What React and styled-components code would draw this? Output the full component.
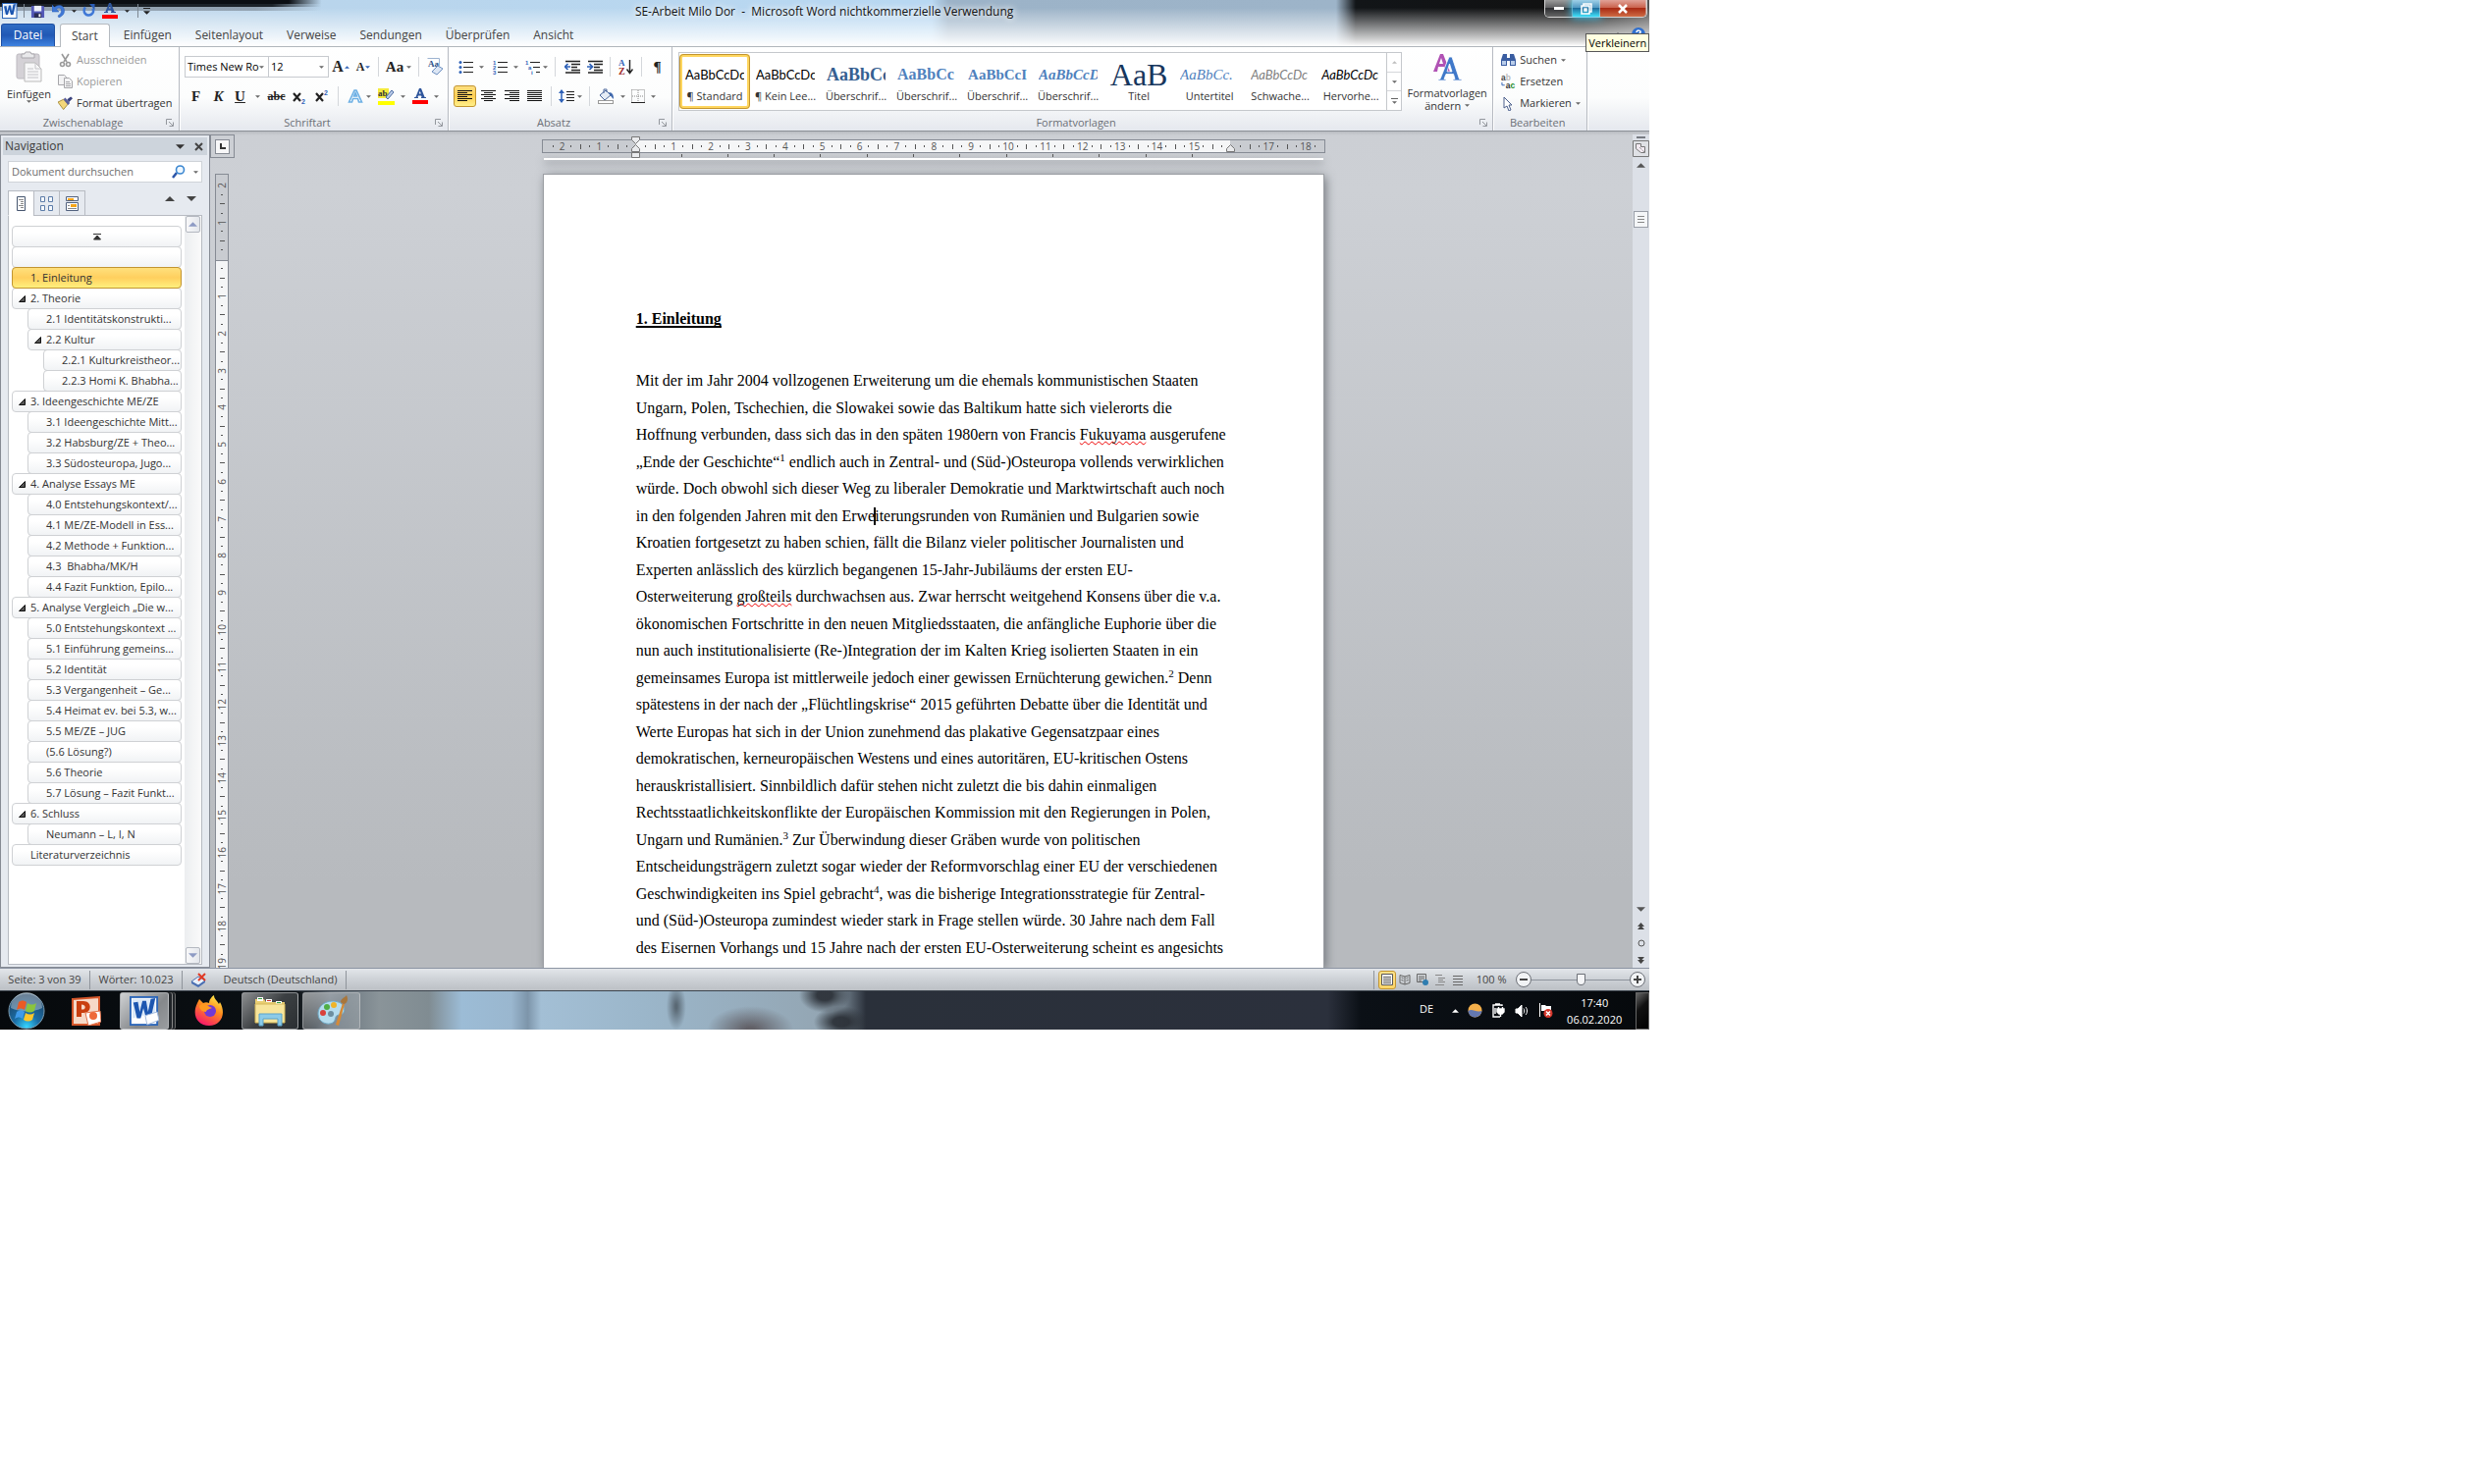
import React from "react";
import styled, { createGlobalStyle, css } from "styled-components";

const GlobalStyle = createGlobalStyle`
  * { box-sizing: border-box; }
  body { margin: 0; background: #fff; }
  button, input, select {
    font: inherit;
    color: inherit;
    margin: 0;
    padding: 0;
    border: none;
    background: none;
  }
  button { white-space: nowrap; }
  svg { display: block; flex: none; }
`;

// ---------- data ----------

const tabs = ["Start", "Einfügen", "Seitenlayout", "Verweise", "Sendungen", "Überprüfen", "Ansicht"];

const styleItems = [
  { name: "¶ Standard", sample: "AaBbCcDc", active: true },
  { name: "¶ Kein Lee...", sample: "AaBbCcDc" },
  { name: "Überschrif...", sample: "AaBbCc", kind: "h1" },
  { name: "Überschrif...", sample: "AaBbCc", kind: "h2" },
  { name: "Überschrif...", sample: "AaBbCcI", kind: "h3" },
  { name: "Überschrif...", sample: "AaBbCcD", kind: "h4" },
  { name: "Titel", sample: "AaB", kind: "title" },
  { name: "Untertitel", sample: "AaBbCc.", kind: "sub" },
  { name: "Schwache...", sample: "AaBbCcDc", kind: "weak" },
  { name: "Hervorhe...", sample: "AaBbCcDc", kind: "em" },
];

const headings = [
  { level: 1, text: "", top: true },
  { level: 1, text: "" },
  { level: 1, text: "1. Einleitung", active: true },
  { level: 1, text: "2. Theorie", open: true },
  { level: 2, text: "2.1 Identitätskonstrukti..." },
  { level: 2, text: "2.2 Kultur", open: true },
  { level: 3, text: "2.2.1 Kulturkreistheor..." },
  { level: 3, text: "2.2.3 Homi K. Bhabha..." },
  { level: 1, text: "3. Ideengeschichte ME/ZE", open: true },
  { level: 2, text: "3.1 Ideengeschichte Mitt..." },
  { level: 2, text: "3.2 Habsburg/ZE + Theo..." },
  { level: 2, text: "3.3 Südosteuropa, Jugo..." },
  { level: 1, text: "4. Analyse Essays ME", open: true },
  { level: 2, text: "4.0 Entstehungskontext/..." },
  { level: 2, text: "4.1 ME/ZE-Modell in Ess..." },
  { level: 2, text: "4.2 Methode + Funktion..." },
  { level: 2, text: "4.3  Bhabha/MK/H" },
  { level: 2, text: "4.4 Fazit Funktion, Epilo..." },
  { level: 1, text: "5. Analyse Vergleich „Die w...", open: true },
  { level: 2, text: "5.0 Entstehungskontext ..." },
  { level: 2, text: "5.1 Einführung gemeins..." },
  { level: 2, text: "5.2 Identität" },
  { level: 2, text: "5.3 Vergangenheit – Ge..." },
  { level: 2, text: "5.4 Heimat ev. bei 5.3, w..." },
  { level: 2, text: "5.5 ME/ZE – JUG" },
  { level: 2, text: "(5.6 Lösung?)" },
  { level: 2, text: "5.6 Theorie" },
  { level: 2, text: "5.7 Lösung – Fazit Funkt..." },
  { level: 1, text: "6. Schluss", open: true },
  { level: 2, text: "Neumann – L, I, N" },
  { level: 1, text: "Literaturverzeichnis" },
];

// ---------- window ----------

const Desktop = styled.div`
  width: 66.78%;
  font-family: "Open Sans", "Noto Sans", sans-serif;
  font-size: 11px;
  line-height: 16px;
  color: #3b3b3b;
  overflow: hidden;
`;

const Glass = styled.header`
  position: relative;
  height: 47px;
  background:
    linear-gradient(90deg, #0b0e12 17.5%, #0b0e1200 19.5%) 0 0 / 100% 4px no-repeat,
    linear-gradient(90deg, #1c2228 16.5%, #1c222800 19.5%) 0 4px / 100% 3px no-repeat,
    linear-gradient(90deg, #7c8894aa 15.5%, #7c889400 19.5%) 0 7px / 100% 4px no-repeat,
    linear-gradient(#ffffff00 8px, #ffffffcc 40px, #fff 47px),
    linear-gradient(90deg, #c9dcec 0, #b9d5ec 20%, #b8d8f2 56.5%, #9cb3c8 57.5%, #9db4c9 81%, #121518 82.2%, #111 96%, #555 100%);
`;

const TitleRow = styled.div`
  display: flex;
  height: 24px;
`;

const QuickAccess = styled.div`
  display: flex;
  align-items: center;
  width: 160px;
  height: 22px;
  padding-left: 2px;
  gap: 4px;
`;

const Title = styled.h1`
  flex: 1;
  margin: 0;
  padding-right: 54px;
  font-size: 12px;
  font-weight: 400;
  line-height: 24px;
  text-align: center;
  white-space: pre;
  color: #111;
  text-shadow: 0 0 6px #fff, 0 0 8px #fff;
`;

const WindowButtons = styled.div`
  display: flex;
  width: 105px;
  height: 18px;
  margin-right: 2px;
  border: 1px solid #d3d3d3;
  border-top: none;
  border-radius: 0 0 5px 5px;
`;

const looks = {
  min: css`width: 28px; background: linear-gradient(#9b9b9b, #5d5d5f 48%, #2f3033 50%, #666); border-radius: 0 0 0 4px;`,
  max: css`width: 28px; background: linear-gradient(#9fd0e8, #4e96c0 48%, #1f6e9e 50%, #40e0f8); box-shadow: 0 0 8px 1px #3ad0ff;`,
  close: css`flex: 1; background: linear-gradient(#e0a297, #c9604a 48%, #a92b14 50%, #cf6c45); border-radius: 0 0 4px 0;`,
};

const WindowButton = styled.button`
  display: flex;
  align-items: center;
  justify-content: center;
  border-right: 1px solid #d3d3d388;
  ${(p) => looks[p.$look]}
`;

const TabRow = styled.nav`
  display: flex;
  height: 23px;
  padding-left: 1px;
  font-size: 12px;
`;

const FileTab = styled.button`
  width: 55px;
  margin-right: 5px;
  color: #fff;
  border: 1px solid #1e4fa3;
  border-bottom: none;
  border-radius: 3px 3px 0 0;
  background: linear-gradient(#2f6dc4, #2058b5 50%, #3f83e0);
`;

const Tab = styled.button`
  padding: 0 12px;
  color: #444;
  border-radius: 3px 3px 0 0;
  ${(p) =>
    p.$active &&
    css`
      padding: 0 11px;
      margin-right: 2px;
      margin-bottom: -1px;
      border: 1px solid #b5bac0;
      border-bottom: none;
      background: #fff;
      z-index: 1;
    `}
`;

const HelpRow = styled.div`
  display: flex;
  flex: 1;
  justify-content: flex-end;
  align-items: center;
  gap: 10px;
  padding: 0 4px 2px 0;
`;

const Tooltip = styled.div`
  position: absolute;
  right: 0;
  top: 34px;
  z-index: 5;
  padding: 0 2px;
  line-height: 17px;
  border: 1px solid #575757;
  background: #ffffe1;
  color: #000;
`;

// ---------- ribbon ----------

const Ribbon = styled.div`
  display: flex;
  height: 87px;
  padding-right: 63px;
  border-top: 1px solid #b0b6bc;
  border-bottom: 1px solid #8b9097;
  background: linear-gradient(#fff, #fcfdfd 60%, #e5e8ee);
`;

const Group = styled.section`
  display: flex;
  flex-direction: column;
  width: ${(p) => p.$w}px;
  flex: ${(p) => (p.$grow ? "1 1 0" : "none")};
  border-right: 1px solid #b6bac1;
  box-shadow: 1px 0 0 #fff;
`;

const GroupBody = styled.div`
  display: flex;
  height: 69px;
  padding: ${(p) => p.$pad || "0"};
`;

const GroupFoot = styled.div`
  display: flex;
  align-items: center;
  height: 16px;
  padding-right: 5px;
  color: #6b6f76;

  span {
    flex: 1;
    text-align: center;
  }
`;

const Rows = styled.div`
  display: flex;
  flex-direction: column;
  flex: 1;
  gap: 8px;
`;

const ToolRow = styled.div`
  display: flex;
  align-items: center;
  height: 22px;
`;

const Tool = styled.button`
  display: flex;
  align-items: center;
  justify-content: center;
  gap: ${(p) => p.$gap || 3}px;
  flex: none;
  width: ${(p) => p.$w || 23}px;
  height: 22px;
  color: #222;
  ${(p) =>
    p.$active &&
    css`
      border: 1px solid #c29530;
      border-radius: 3px;
      background: linear-gradient(#ffdf80, #ffcf55 50%, #fff08a);
    `}
`;

const Glyph = styled.span`
  font-family: "Liberation Serif", serif;
  font-size: ${(p) => p.$size || 15}px;
  font-weight: bold;
  font-style: ${(p) => (p.$italic ? "italic" : "normal")};
  text-decoration: ${(p) => p.$line || "none"};
  color: #222;
`;

const Sep = styled.span`
  flex: none;
  width: 1px;
  height: ${(p) => p.$h || 20}px;
  margin: 0 ${(p) => p.$m || 5}px;
  background: ${(p) => p.$c || "#d4d7db"};
`;

const Combo = styled.label`
  display: flex;
  align-items: center;
  width: ${(p) => p.$w}px;
  height: 22px;
  margin-right: -1px;
  padding: 0 4px 0 2px;
  border: 1px solid #c7cacf;
  background: #fff;
  color: #000;

  select {
    flex: 1;
    min-width: 0;
    appearance: none;
    outline: none;
  }
`;

const Stack = styled.div`
  display: flex;
  flex-direction: column;
`;

const TextTool = styled.button`
  display: flex;
  align-items: center;
  gap: 4px;
  height: 22px;
  color: ${(p) => (p.disabled ? "#9a9a9a" : "#333")};
`;

const BigTool = styled.button`
  display: flex;
  flex-direction: column;
  align-items: center;
  flex: none;
  width: ${(p) => p.$w}px;
  padding-top: 2px;
  line-height: 13px;
  color: #333;

  > svg:first-child {
    margin-bottom: 5px;
  }
  > span {
    display: flex;
    align-items: center;
    gap: 4px;
  }
`;

const Gallery = styled.div`
  display: flex;
  flex: 1;
  height: 60px;
  border: 1px solid #c5c8cc;
  background: #fff;
`;

const StyleItem = styled.button`
  display: flex;
  flex-direction: column;
  align-items: center;
  flex: 1 1 0;
  min-width: 0;
  height: 56px;
  margin-top: 1px;
  color: #333;
  border: 3px solid transparent;
  ${(p) =>
    p.$active &&
    css`
      border-color: #ffd65e;
      border-radius: 4px;
      outline: 1px solid #c29530;
      outline-offset: -1px;
    `}
`;

const sampleLooks = {
  h1: css`font: bold 18px "Liberation Serif", serif; color: #365f91;`,
  h2: css`font: bold 16px "Liberation Serif", serif; color: #4f81bd;`,
  h3: css`font: bold 15px "Liberation Serif", serif; color: #4f81bd;`,
  h4: css`font: italic bold 15px "Liberation Serif", serif; color: #4f81bd;`,
  title: css`font: 32px "Liberation Serif", serif; color: #17365d;`,
  sub: css`font: italic 15px "Liberation Serif", serif; color: #4f81bd;`,
  weak: css`font-style: italic; color: #808080;`,
  em: css`font-style: italic;`,
};

const Sample = styled.span`
  display: flex;
  align-items: flex-end;
  justify-content: ${(p) => (p.$kind === "title" ? "center" : "flex-start")};
  width: 60px;
  height: 31px;
  overflow: hidden;
  font-family: Lato, sans-serif;
  font-size: 13px;
  color: #000;
  ${(p) => sampleLooks[p.$kind]}
  line-height: 26px;
`;

const StyleName = styled.span`
  line-height: 18px;
`;

const GalleryNav = styled.div`
  display: flex;
  flex-direction: column;
  width: 15px;
  border-left: 1px solid #c5c8cc;

  button {
    display: flex;
    flex: 1;
    flex-direction: column;
    align-items: center;
    justify-content: center;
    gap: 2px;
    border-bottom: 1px solid #d5d7da;
  }
  button:last-child {
    border-bottom: none;
  }
`;

// small dash above a caret, marks "more"
const Dash = styled.span`
  width: 7px;
  height: 1px;
  background: ${(p) => p.$c || "#666"};
`;

const MoreStack = styled.span`
  display: flex;
  flex-direction: column;
  align-items: center;
  gap: 2px;
`;

// ---------- workspace ----------

const Workspace = styled.main`
  display: flex;
  padding-top: 3px;
  background: linear-gradient(#b9bcc1 0, #cccfd4 4px, #cdd0d5 60px, #b7babe 90%);
`;

const NavPane = styled.aside`
  display: flex;
  flex-direction: column;
  width: 214px;
  padding: 2px;
  border: 1px solid #868b94;
  background: #e6eaf0;
`;

const NavHead = styled.div`
  display: flex;
  align-items: center;
  gap: 10px;
  height: 18px;
  padding: 0 4px 0 2px;
  background: #cdd4dc;

  h2 {
    flex: 1;
    margin: 0;
    font-size: 12px;
    font-weight: 400;
  }
`;

const SearchBox = styled.label`
  display: flex;
  align-items: center;
  gap: 8px;
  height: 22px;
  margin: 6px 5px 0;
  padding: 0 3px;
  border: 1px solid #cfd3d8;
  background: #fff;

  input {
    flex: 1;
    min-width: 0;
    outline: none;
  }
  input::placeholder {
    color: #6d6d6d;
  }
`;

const ViewTabs = styled.div`
  display: flex;
  align-items: flex-end;
  height: 34px;
  margin: 0 5px -1px;
`;

const ViewTab = styled.button`
  display: flex;
  align-items: center;
  justify-content: center;
  width: 27px;
  height: 26px;
  margin-right: -1px;
  border: 1px solid #b7bbc2;
  background: ${(p) => (p.$active ? "#fff" : "#e6eaf0")};
  border-bottom-color: ${(p) => (p.$active ? "#fff" : "#b7bbc2")};
  z-index: 1;
`;

const Arrows = styled.div`
  display: flex;
  flex: 1;
  justify-content: flex-end;
  gap: 12px;
  height: 20px;
  padding-right: 6px;
`;

const Outline = styled.div`
  display: flex;
  flex: 1;
  margin: 0 5px;
  border: 1px solid #b7bbc2;
  background: #fff;
`;

const HeadingList = styled.ul`
  flex: 1;
  min-width: 0;
  margin: 0;
  padding: 10px 3px 0;
  list-style: none;
`;

const HeadingRow = styled.button`
  display: flex;
  align-items: center;
  width: calc(100% - ${(p) => (p.$level - 1) * 16}px);
  height: 22px;
  margin: 0 0 -1px ${(p) => (p.$level - 1) * 16}px;
  padding-left: ${(p) => (p.$center ? 0 : 6)}px;
  white-space: pre;
  border: 1px solid #cfd1d4;
  border-radius: 4px;
  background: linear-gradient(#fff 30%, #f1f3f5);
  color: #333;
  justify-content: ${(p) => (p.$center ? "center" : "flex-start")};
  ${(p) =>
    p.$active &&
    css`
      position: relative;
      border-color: #c29530;
      background: linear-gradient(#ffe07c, #ffcf5e 50%, #fff07e);
    `}

  svg, i {
    width: 12px;
    flex: none;
  }
`;

const ListScroll = styled.div`
  display: flex;
  flex-direction: column;
  justify-content: space-between;
  width: 17px;
  padding: 0 1px;
  background: linear-gradient(90deg, #eceef0, #fafafa);

  button {
    display: flex;
    align-items: center;
    justify-content: center;
    height: 17px;
    border: 1px solid #b4b8c0;
    border-radius: 2px;
    background: linear-gradient(90deg, #f8f8f9, #e4e7ec);
  }
`;

const RulerColumn = styled.div`
  display: flex;
  flex-direction: column;
  width: 25px;
`;

const TabStop = styled.button`
  display: flex;
  align-items: center;
  justify-content: center;
  width: 25px;
  height: 24px;
  border: 1px solid #868b94;

  span {
    display: flex;
    align-items: center;
    justify-content: center;
    width: 15px;
    height: 15px;
    border: 1px solid #868b94;
    background: #f7f7f8;
  }
`;

const VRuler = styled.div`
  display: flex;
  flex-direction: column;
  flex: 1;
  width: 14px;
  margin: 16px 0 0 5px;
  padding-top: 6px;
  border: 1px solid #868b94;
  border-bottom: none;
  background: linear-gradient(#c9ccd1 87px, #868b94 87px, #868b94 88px, #f5f6f7 88px);
`;

const Mark = styled.span`
  display: flex;
  align-items: center;
  justify-content: center;
  flex: 1 1 0;
  min-width: 0;
  min-height: 0;
  font-size: 10px;
  line-height: 10px;
  color: #555;
  white-space: nowrap;

  b {
    font-weight: 400;
    ${(p) => p.$vertical && "writing-mode: vertical-rl; transform: rotate(180deg);"}
  }
  i {
    flex: none;
    width: ${(p) => (p.$vertical ? (p.$long ? 5 : 2) : 1)}px;
    height: ${(p) => (p.$vertical ? 1 : p.$long ? 5 : 2)}px;
    background: #555;
  }
`;

const DocColumn = styled.div`
  flex: 1;
  display: flex;
  flex-direction: column;
  align-items: center;
  min-width: 0;
`;

const HRulerWrap = styled.div`
  width: 56%;
  height: 24px;
  padding-top: 5px;
`;

const HRuler = styled.div`
  display: flex;
  position: relative;
  height: 14px;
  padding: 0 5px;
  border: 1px solid #868b94;
  background: linear-gradient(90deg, #c9ccd1 11.8%, #f5f6f7 11.8%, #f5f6f7 87.9%, #c9ccd1 87.9%);
`;

const Indent = styled.span`
  position: absolute;
  left: ${(p) => p.$at}%;
  top: ${(p) => p.$top}px;
  margin-left: -4px;
`;

const DefaultTabs = styled.div`
  display: flex;
  width: 71.2%;
  height: 3px;
  margin: 1px 0 0 11.9%;

  span {
    flex: 1;
    border-right: 1px solid #555;
  }
`;

const PreviousPage = styled.div`
  width: 55.8%;
  height: 2px;
  background: #fff;
  box-shadow: 0 3px 8px #6b6f75;
`;

const Page = styled.article`
  width: 55.8%;
  margin-top: 15px;
  padding: 133px 0 7px 94px;
  font-family: "Liberation Serif", serif;
  font-size: 16px;
  color: #000;
  background: #fff;
  box-shadow: 0 0 0 1px #9b9ea3, 2px 2px 10px #6b6f75;
  clip-path: inset(-14px -14px 0 -14px);

  h3 {
    margin: 0 0 35px;
    font-size: 16px;
    line-height: 28px;
    text-decoration: underline;
    text-decoration-thickness: 2px;
    text-decoration-skip-ink: none;
    text-underline-offset: 2px;
  }
  sup {
    font-size: 11px;
    line-height: 0;
  }
`;

const Line = styled.div`
  line-height: 28px;
  white-space: pre;

  &:nth-of-type(even) {
    line-height: 27px;
  }
`;

const Misspelled = styled.span`
  text-decoration: underline wavy #e00 1px;
  text-decoration-skip-ink: none;
  text-underline-offset: 1px;
`;

const TextCursor = styled.span`
  position: relative;

  &::after {
    content: "";
    position: absolute;
    left: -1px;
    top: 0;
    width: 2px;
    height: 18px;
    background: #000;
  }
`;

const DocScroll = styled.div`
  display: flex;
  flex-direction: column;
  align-items: center;
  width: 17px;
  background: #dce0e7;

  button {
    display: flex;
    align-items: center;
    justify-content: center;
    width: 17px;
    height: 17px;
  }
`;

const SplitBar = styled.span`
  width: 9px;
  height: 2px;
  margin: 2px 0;
  background: #777b82;
`;

const ScrollThumb = styled.span`
  display: flex;
  align-items: center;
  justify-content: center;
  width: 15px;
  height: 17px;
  margin-top: 38px;
  border: 1px solid #9a9fa8;
  background: #f4f6f8;
`;

const ScrollEnd = styled.div`
  margin-top: auto;
`;

// ---------- status bar / taskbar ----------

const StatusBar = styled.footer`
  display: flex;
  align-items: center;
  height: 23px;
  border-top: 1px solid #8c94a3;
  background: linear-gradient(#e3e6ea, #cdd1d6 50%, #bcc0c5);
`;

const StatusCell = styled.button`
  display: flex;
  align-items: center;
  justify-content: center;
  width: ${(p) => p.$w}px;
  height: 19px;
  color: #444;
  border-right: ${(p) => (p.$plain ? "none" : "1px solid #8f949b")};
`;

const ViewButtons = styled.div`
  display: flex;
  align-items: center;
  margin-left: auto;
  padding: 0 4px;
  border-left: 1px solid #8f949b;
`;

const ViewButton = styled.button`
  display: flex;
  align-items: center;
  justify-content: center;
  width: 18px;
  height: 19px;
  border: 1px solid ${(p) => (p.$active ? "#c29530" : "transparent")};
  border-radius: 3px;
  background: ${(p) => (p.$active ? "linear-gradient(#ffe28a, #ffd567)" : "none")};
`;

const Round = styled.button`
  display: flex;
  align-items: center;
  justify-content: center;
  width: 16px;
  height: 16px;
  border: 1px solid #6c7077;
  border-radius: 50%;
  background: #f1f3f5;
`;

const Zoom = styled.input`
  appearance: none;
  width: 100px;
  height: 16px;
  background: linear-gradient(#8d939c, #8d939c) center / 100% 1px no-repeat;

  &::-webkit-slider-thumb {
    appearance: none;
    width: 9px;
    height: 12px;
    border: 1px solid #6c7077;
    border-radius: 1px 1px 5px 5px;
    background: #f4f5f7;
  }
`;

const Taskbar = styled.div`
  display: flex;
  align-items: center;
  height: 40px;
  border-top: 1px solid #3b434c;
  color: #fff;
  background:
    radial-gradient(ellipse 10px 24px at 41% 40%, #4a5660cc 10%, #4a566000),
    radial-gradient(ellipse 26px 18px at 50% 10%, #2b3037ee 30%, #2b303700),
    radial-gradient(ellipse 44px 24px at 45.5% 100%, #5a555add 10%, #5a555a00),
    radial-gradient(ellipse 28px 16px at 51% 80%, #2b3037ee 30%, #2b303700),
    linear-gradient(90deg, #06090c 0, #0b1014 18%, #64707a 20%, #8a9499 23%, #808c92 26%, #9cbcd6 28%, #9ab7cf 31%, #7d95aa 32%, #a3bfd5 32.8%, #9bb6ca 39%, #93a5b2 50.5%, #2a303a 52.5%, #2b303c 80.5%, #0b1016 82.5%, #06090c 100%);
`;

const StartButton = styled.button`
  display: flex;
  justify-content: center;
  width: 54px;
`;

const TaskButton = styled.button`
  display: flex;
  align-items: center;
  justify-content: center;
  width: ${(p) => p.$w}px;
  height: 38px;
  margin-left: ${(p) => p.$ml || 0}px;
  ${(p) =>
    p.$running &&
    css`
      border: 1px solid #b9bcbfaa;
      border-radius: 3px;
      background: linear-gradient(135deg, #ffffff88, #ffffff33 50%, #ffffff22);
    `}
  ${(p) =>
    p.$stacked &&
    css`
      background: linear-gradient(135deg, #d0d2d4, #85888b 60%, #9a9da0);
      box-shadow: 3px 0 0 #202428, 4px 0 0 #888, 6px 0 0 #202428, 7px 0 0 #666;
    `}
`;

const Tray = styled.div`
  display: flex;
  align-items: center;
  margin-left: auto;
  gap: 9px;
`;

const Language = styled.button`
  margin-right: 10px;
  padding-bottom: 4px;
  color: #fff;
`;

const Clock = styled.time`
  width: 66px;
  text-align: center;
  line-height: 17px;
`;

const ShowDesktop = styled.button`
  width: 14px;
  height: 38px;
  border: 1px solid #666;
  background: linear-gradient(135deg, #666, #111 40%, #000);
`;

// ---------- icons ----------

const Caret = ({ up, s = 5, c = "#666" }) => (
  <svg width={s} height={Math.ceil(s / 2)} viewBox="0 0 10 5">
    <path d={up ? "M0 5L5 0L10 5z" : "M0 0h10L5 5z"} fill={c} />
  </svg>
);

const WordLogo = ({ s = 16 }) => (
  <svg width={s} height={s} viewBox="0 0 32 32">
    <rect x="1" y="1" width="29" height="30" fill="#fff" stroke="#2c66b8" strokeWidth="2" />
    <path d="M3 3h25v15L3 24z" fill="#dce9f8" />
    <path d="M4 7l5-1 2 11 3-12h4l2 12 3-14 5-1-5 22h-5l-3-11-3 11H8z" fill="#1c56b0" />
    {s > 20 && <path d="M17 21l13-4 2 9-13 5z" fill="#fff" stroke="#9fb8dc" />}
  </svg>
);

const SaveIcon = () => (
  <svg width="15" height="15" viewBox="0 0 16 16">
    <path d="M1 2h13l1 1v12H1z" fill="#5359b8" />
    <path d="M4 2h8v6H4z" fill="#eef2fa" />
    <path d="M4 10h8v5H4z" fill="#2a2d55" />
    <path d="M9 11h2v3H9z" fill="#fff" />
  </svg>
);

const UndoIcon = () => (
  <svg width="13" height="14" viewBox="0 0 13 14">
    <path d="M0 1v7h7L4.500 5.500C7 3 9.500 4 9.500 7c0 2-1.500 4-3.500 5l1 2c4-2 5.500-4 5.500-7C12.500 1 6 0 2.500 3.500z" fill="#3f78d6" stroke="#2a5cb4" strokeWidth=".5" />
  </svg>
);

const RedoIcon = () => (
  <svg width="13" height="14" viewBox="0 0 13 14">
    <path d="M3 3.500a4.700 4.700 0 1 0 7.500 1" fill="none" stroke="#3f78d6" strokeWidth="2.600" />
    <path d="M7 0h5.500v6z" fill="#2a5cb4" />
  </svg>
);

const ColorA = ({ bar = "#f00", s = 16 }) => (
  <svg width={s} height={s} viewBox="0 0 16 16">
    <path d="M3 10L7 0h2l4 10h-3l-1-2.500H6L5 10zM6.800 5.500h2L7.800 2.800z" fill="#2f569c" fillRule="evenodd" />
    <path d="M2 9.500h4M9 9.500h5" stroke="#2f569c" />
    <rect y="12" width="16" height="4" fill={bar} />
  </svg>
);

const PasteIcon = () => (
  <svg width="28" height="32" viewBox="0 0 28 32">
    <rect x="1" y="3" width="23" height="25" rx="2" fill="#d4d1d6" stroke="#bdbac0" />
    <path d="M6 7V3h3l1-2h5l1 2h3v4z" fill="#e9e9eb" stroke="#a9a7ac" />
    <path d="M9 12h11l6 6v13H9z" fill="#f7f7f8" stroke="#bbb" />
    <path d="M20 12v6h6M12 18h6M12 21h11M12 24h11M12 27h11" fill="none" stroke="#c4c4c8" />
  </svg>
);

const CutIcon = () => (
  <svg width="15" height="15" viewBox="0 0 15 15" fill="none" stroke="#999" strokeWidth="1.600">
    <path d="M4 1l5 8M11 1L6 9" />
    <circle cx="4.500" cy="11.500" r="2" />
    <circle cx="10.500" cy="11.500" r="2" />
  </svg>
);

const CopyIcon = () => (
  <svg width="15" height="14" viewBox="0 0 15 14" fill="#f3f3f4" stroke="#a6a6aa">
    <path d="M.5.5h6l2 2v8h-8z" />
    <path d="M6.500 3.500h5l3 3v7h-8zM8 7.500h4M8 9.500h5M8 11.500h5" />
  </svg>
);

const BrushIcon = () => (
  <svg width="15" height="14" viewBox="0 0 16 14">
    <path d="M0 6l6-3 5 5-5 6z" fill="#f4d77a" stroke="#a48a3c" />
    <path d="M6 3l2-2 5 6-2 2z" fill="#5b5f9b" />
    <path d="M10 3l4-3 2 2-4 4z" fill="#39427d" />
  </svg>
);

const EraserIcon = () => (
  <svg width="18" height="18" viewBox="0 0 18 18">
    <text x="1" y="9" fontSize="9" fontWeight="bold" fontFamily="Liberation Serif" fill="#2b4f87">Aa</text>
    <path d="M5 14l6-6 5 3-6 6z" fill="#dce6f4" stroke="#6d8fc0" />
    <path d="M0.500 0.500h12v9" fill="none" stroke="#9db3d0" />
  </svg>
);

const ScriptX = ({ up }) => (
  <svg width="14" height="15" viewBox="0 0 14 15">
    <path d="M1 4l7 8M8 4l-7 8" stroke="#222" strokeWidth="2.200" />
    <text x="9" y={up ? 6 : 15} fontSize="7" fontWeight="bold" fontFamily="Liberation Sans" fill="#2f62b8">2</text>
  </svg>
);

const OutlineA = () => (
  <svg width="16" height="16" viewBox="0 0 16 16">
    <path d="M1.500 14L7 2h2l5.500 12h-3l-1-3.500h-5l-1 3.500zM6.500 8h3L8 4.500z" fill="#fff" stroke="#6db0e4" strokeWidth="1.600" fillRule="evenodd" />
  </svg>
);

const MarkerIcon = () => (
  <svg width="17" height="17" viewBox="0 0 17 17">
    <rect width="11" height="10" fill="#f4ea3c" />
    <text x="0" y="8" fontSize="9" fontWeight="bold" fontFamily="Liberation Serif" fill="#333">ab</text>
    <path d="M8 9l6-7 2 2-6 7z" fill="#b9cbe8" stroke="#4c6ca3" />
    <rect y="13" width="17" height="4" fill="#ff0" />
  </svg>
);

const lineShapes = {
  left: [[0, 15], [0, 10], [0, 15], [0, 10], [0, 15], [0, 10]],
  center: [[0, 15], [3, 9], [0, 15], [3, 9], [0, 15], [3, 9]],
  right: [[0, 15], [5, 10], [0, 15], [5, 10], [0, 15], [5, 10]],
  full: [[0, 15], [0, 15], [0, 15], [0, 15], [0, 15], [0, 15]],
};

const AlignIcon = ({ kind, c = "#111" }) => (
  <svg width="15" height="12" viewBox="0 0 15 12">
    {lineShapes[kind].map(([x, w], i) => (
      <rect key={i} x={x} y={i * 2} width={w} height="1" fill={c} />
    ))}
  </svg>
);

const ListIcon = ({ kind }) => (
  <svg width="15" height="15" viewBox="0 0 15 15">
    {[2, 7, 12].map((y, i) => (
      <g key={y}>
        {kind === "dots" ? (
          <circle cx="2" cy={y + 0.5} r="1.500" fill="#2f62b8" />
        ) : (
          <text x={kind === "multi" ? i * 3 : 0} y={y + 3} fontSize="6" fontWeight="bold" fontFamily="Liberation Sans" fill="#2f62b8">
            {kind === "multi" ? "1ai"[i] : i + 1}
          </text>
        )}
        <rect x={kind === "multi" ? 5 + i * 3 : 5} y={y} width={kind === "multi" ? 10 - i * 3 : 10} height="1" fill="#222" />
      </g>
    ))}
  </svg>
);

const IndentIcon = ({ out }) => (
  <svg width="16" height="14" viewBox="0 0 16 14">
    <path d="M1 1.500h15M7 4.500h9M7 7.500h6M7 10.500h9M1 13h15" stroke="#222" strokeWidth="1.400" />
    <path d={out ? "M6 7H1M3.500 4L.5 7l3 3" : "M0 7h5M2.500 4l3 3-3 3"} stroke="#2f62b8" strokeWidth="1.700" fill="none" />
  </svg>
);

const SortIcon = () => (
  <svg width="15" height="16" viewBox="0 0 15 16">
    <text x="0" y="7" fontSize="9" fontWeight="bold" fontFamily="Liberation Serif" fill="#2f62b8">A</text>
    <text x="0" y="16" fontSize="10" fontWeight="bold" fontFamily="Liberation Serif" fill="#a02c2c">Z</text>
    <path d="M11.500 1v13M8.500 10.500l3 4 3-4" stroke="#222" strokeWidth="1.400" fill="none" />
  </svg>
);

const SpacingIcon = () => (
  <svg width="16" height="16" viewBox="0 0 16 16">
    <path d="M3 2v12" stroke="#2f62b8" strokeWidth="1.500" />
    <path d="M0 5l3-4 3 4zM0 11l3 4 3-4z" fill="#2f62b8" />
    <path d="M8 3.500h8M8 6.500h8M8 9.500h8M8 12.500h8" stroke="#222" />
  </svg>
);

const FillIcon = () => (
  <svg width="17" height="16" viewBox="0 0 17 16">
    <path d="M2 7l6-5 5 5-6 5z" fill="#e5ecf6" stroke="#4a679c" />
    <path d="M6 5V1h3v3" fill="none" stroke="#4a679c" />
    <path d="M11 4c4 0 5 3 5 7l-2-2-2-3z" fill="#3e68ad" />
    <rect x="0.500" y="12.500" width="15" height="3" fill="#fff" stroke="#999" />
  </svg>
);

const BorderIcon = () => (
  <svg width="14" height="14" viewBox="0 0 14 14">
    <path d="M.5.5h13v13M.5.500v13M7 1v12M1 7h12" fill="none" stroke="#888" strokeDasharray="1 1" />
    <path d="M0 13.500h14" stroke="#222" />
  </svg>
);

const LauncherIcon = () => (
  <svg width="8" height="8" viewBox="0 0 8 8" fill="none" stroke="#93979d">
    <path d="M.5 6V.5H6M3 3l4 4M7.500 3.500v4h-4" />
  </svg>
);

const ChangeStyles = () => (
  <svg width="30" height="28" viewBox="0 0 30 28">
    <path d="M1 18L8 0h3l7 18h-5l-1-5H6l-1 5zM7 10h4L9 4z" fill="#b052b4" fillRule="evenodd" />
    <path d="M6 27v-1.500h2L17 3h3l7.500 22.500H30V27h-9v-1.500h2l-1.500-5H14l-2 5h2V27zM15 18h5l-2.500-8z" fill="#3f78c9" stroke="#fff" strokeWidth=".8" fillRule="evenodd" />
  </svg>
);

const Binoculars = () => (
  <svg width="15" height="14" viewBox="0 0 15 14">
    <path d="M2 1h4v4h3V1h4l2 6v6H9V8H6v5H0V7z" fill="#3a5da1" />
    <path d="M1 8h4v4H1zM10 8h4v4h-4z" fill="#b9cdea" />
  </svg>
);

const ReplaceIcon = () => (
  <svg width="15" height="16" viewBox="0 0 16 16" fontFamily="Liberation Sans" fontWeight="bold" fontSize="9">
    <text x="0" y="7" fill="#444">a</text>
    <text x="5" y="7" fill="#bbb">b</text>
    <text x="5" y="15" fill="#333">a</text>
    <text x="10" y="15" fill="#1c8a2c">c</text>
    <path d="M1 9v3h3" fill="none" stroke="#2f62b8" />
  </svg>
);

const CursorIcon = () => (
  <svg width="15" height="15" viewBox="0 0 15 15">
    <path d="M3 1l8 8H8l2 5-2 1-2-5-3 2z" fill="#fff" stroke="#4a5f8c" />
  </svg>
);

const SearchIcon = () => (
  <svg width="14" height="14" viewBox="0 0 14 14" fill="none">
    <path d="M5 8l-4 5" stroke="#2b55a8" strokeWidth="2.500" />
    <circle cx="8.500" cy="5" r="4" fill="#eef7ff" stroke="#3a86d0" strokeWidth="1.600" />
  </svg>
);

const PageTabIcon = () => (
  <svg width="9" height="15" viewBox="0 0 9 15">
    <path d="M.5.5h8v14h-8z" fill="#fff" stroke="#46566f" />
    <path d="M2 3.500h5M4 5.500h3M4 7.500h3M2 9.500h5M4 11.500h3" stroke="#888" />
  </svg>
);

const ThumbsIcon = () => (
  <svg width="13" height="15" viewBox="0 0 13 15" fill="#f4f8fd" stroke="#5c7ca8">
    <path d="M.5.5h4v5h-4zM8.500.5h4v5h-4zM.5 9.500h4v5h-4zM8.500 9.500h4v5h-4z" />
  </svg>
);

const ResultsIcon = () => (
  <svg width="13" height="15" viewBox="0 0 13 15">
    <path d="M.5.5h12v4H.5zM.5 6.500h12v8H.5z" fill="#fff" stroke="#51617e" />
    <path d="M2 2h6v2H2zM5 8h6v3H5z" fill="#f5a51b" />
    <path d="M2 12.500h9M2 9.500h2" stroke="#888" />
  </svg>
);

const ProofIcon = () => (
  <svg width="17" height="15" viewBox="0 0 17 15">
    <path d="M1 9l7-5 7 4-7 5z" fill="#e9f0fa" stroke="#5073ae" />
    <path d="M1 9v2l7 4 7-5V8l-7 5z" fill="#4a6fb4" />
    <path d="M8 1l7 7M15 1L8 8" stroke="#e03a25" strokeWidth="2" />
  </svg>
);

const BookIcon = () => (
  <svg width="12" height="11" viewBox="0 0 12 11" fill="none" stroke="#666">
    <path d="M6 2v8M6 2L1 .5v8L6 10l5-1.500v-8zM2.500 3l2 .5M2.500 5.500l2 .5M7.500 3.500l2-.5M7.500 6l2-.5" />
  </svg>
);

const WebIcon = () => (
  <svg width="12" height="12" viewBox="0 0 12 12">
    <path d="M.5.5h9v8h-9zM2 3h6M2 5h6M2 7h3" fill="none" stroke="#666" />
    <circle cx="9" cy="9" r="3" fill="#2f7db0" />
  </svg>
);

const StartOrb = () => (
  <svg width="38" height="38" viewBox="0 0 38 38">
    <defs>
      <radialGradient id="orb" cx="50%" cy="95%" r="90%">
        <stop offset="0" stopColor="#35d6ff" />
        <stop offset=".4" stopColor="#1b6ea6" />
        <stop offset="1" stopColor="#1c3f60" />
      </radialGradient>
    </defs>
    <circle cx="19" cy="19" r="18" fill="url(#orb)" stroke="#7e9db1" />
    <path d="M3 16a16 16 0 0 1 32 0c-8 4-22 5-32 0z" fill="#fff" opacity=".35" />
    <path d="M11 10c3-2 5-2 8 0l-2 8c-3-2-5-2-8 0z" fill="#ea5b25" />
    <path d="M20 11c3 2 6 2 9 0l-2 8c-3 2-6 2-9 0z" fill="#8ac53e" />
    <path d="M9 20c3-2 5-2 8 0l-2 7c-3-2-5-2-8 0z" fill="#3f9bea" />
    <path d="M18 21c3 2 6 2 9 0l-2 7c-3 2-6 2-9 0z" fill="#fcc72b" />
  </svg>
);

const PowerPointIcon = () => (
  <svg width="30" height="30" viewBox="0 0 30 30">
    <path d="M1 3l27-2v28H1z" fill="#f6d9c8" stroke="#d5562a" strokeWidth="2" />
    <path d="M5 5h7c9 0 9 12 0 12h-2v4H5zM10 8.500v5c5 1 5-5 0-5z" fill="#c93f10" fillRule="evenodd" />
    <path d="M14 17l15-2 1 11-13 4z" fill="#fff" stroke="#e2734b" />
    <circle cx="22" cy="20" r="4" fill="#ee6a3a" />
  </svg>
);

const FirefoxIcon = () => (
  <svg width="32" height="32" viewBox="0 0 32 32">
    <defs>
      <linearGradient id="fox" x1=".8" y1="0" x2=".3" y2="1">
        <stop offset="0" stopColor="#fff14d" />
        <stop offset=".45" stopColor="#ff8a1e" />
        <stop offset="1" stopColor="#f5156c" />
      </linearGradient>
    </defs>
    <path d="M4 8l2-4 4 4c2-1 4-1 6 0 0-3 2-6 5-8 0 4 3 5 5 9l1-2c7 12 1 24-11 24S-2 20 4 8z" fill="url(#fox)" />
    <circle cx="17" cy="16" r="6" fill="#7139d6" />
    <path d="M6 11c3-3 6-2 9 0l4 2c-3 1-6 2-6 4-4 0-7-3-7-6z" fill="#ff9a20" />
  </svg>
);

const ExplorerIcon = () => (
  <svg width="34" height="32" viewBox="0 0 34 32">
    <path d="M2 4h9l2 3h19v21H2z" fill="#e9ce72" />
    <path d="M4 2h6v4H4zM13 4h6v3h-6zM23 6h6v3h-6z" fill="#fff" />
    <path d="M5 3h4v1H5zM24 7h4v1h-4z" fill="#2f9a3c" />
    <path d="M14 5h4v1h-4z" fill="#c33" />
    <path d="M2 9h30v19H2z" fill="#f7e59b" stroke="#d5b85a" />
    <path d="M6 31V19h23v12h-4v-7H10v7z" fill="#8ccbe8" stroke="#5ba3cb" />
  </svg>
);

const PaintIcon = () => (
  <svg width="34" height="32" viewBox="0 0 34 32">
    <path d="M3 19C3 8 16 3 26 8c6 4 4 12-1 12-6 0-3 5-7 8-5 3-15 0-15-9z" fill="#b5dcee" stroke="#6fa9c5" />
    <circle cx="8" cy="18" r="3" fill="#d8403c" />
    <circle cx="12" cy="12" r="3" fill="#4fae45" />
    <circle cx="19" cy="10" r="3" fill="#f0b429" />
    <circle cx="16" cy="19" r="3" fill="#6d8e9f" />
    <path d="M28 8l2 1-6 22-3-1z" fill="#d48a38" />
    <path d="M26 7c0-4 4-4 6-7 2 4 1 8-3 9z" fill="#a8763c" />
  </svg>
);

const TrayApp = () => (
  <svg width="15" height="15" viewBox="0 0 15 15">
    <circle cx="7.500" cy="7.500" r="7" fill="#f5b04b" />
    <path d="M.5 8c4-3 8 2 14 0-1 8-13 9-14 0z" fill="#6478b0" />
  </svg>
);

const BatteryIcon = () => (
  <svg width="15" height="15" viewBox="0 0 15 15" fill="none" stroke="#fff" strokeWidth="1.400">
    <path d="M11 3V2H2v12h7M4 1h5" />
    <path d="M6 6h7v3l-2 2H8L6 9zM7.500 6V4M11.500 6V4M9.500 11v3M4 5v6" fill="#fff" />
  </svg>
);

const SoundIcon = () => (
  <svg width="15" height="14" viewBox="0 0 15 14" fill="none" stroke="#fff">
    <path d="M1 5h2l4-4v12L3 9H1z" fill="#fff" />
    <path d="M9 4.500c1 1 1 4 0 5M11 3c2 2 2 6 0 8" />
  </svg>
);

const FlagIcon = () => (
  <svg width="15" height="15" viewBox="0 0 15 15">
    <path d="M1.500 0v14" stroke="#fff" />
    <path d="M3 2h4l1 1h5v6H8L7 8H3z" fill="#fff" />
    <circle cx="10" cy="10.500" r="4.500" fill="#d6362b" />
    <path d="M8 8.500l4 4M12 8.500l-4 4" stroke="#fff" strokeWidth="1.500" />
  </svg>
);

// ---------- parts ----------

const Foot = ({ label, launcher = true }) => (
  <GroupFoot>
    <span>{label}</span>
    {launcher && <button aria-label={label}><LauncherIcon /></button>}
  </GroupFoot>
);

const Marks = ({ from, to, vertical, skip = [] }) => {
  const marks = [];
  for (let i = from; i <= to; i++) marks.push(i);
  return marks.map((i) => {
    const label = i % 4 === 0;
    return (
      <Mark key={i} $vertical={vertical} $long={i % 2 === 0}>
        {label ? !skip.includes(i) && <b>{Math.abs(i / 4)}</b> : <i />}
      </Mark>
    );
  });
};

const TitleBar = () => (
  <Glass>
    <TitleRow>
      <QuickAccess>
        <WordLogo />
        <Sep $m={2} $h={14} $c="#7d8791" />
        <button aria-label="Speichern"><SaveIcon /></button>
        <Tool $w={30} $gap={7} aria-label="Rückgängig"><UndoIcon /><Caret c="#222" /></Tool>
        <button aria-label="Wiederholen"><RedoIcon /></button>
        <Tool $w={34} $gap={7} aria-label="Schriftfarbe"><ColorA /><Caret c="#222" /></Tool>
        <Sep $m={1} $h={14} $c="#7d8791" />
        <MoreStack>
          <Dash $c="#222" />
          <Caret s={7} c="#222" />
        </MoreStack>
      </QuickAccess>
      <Title>SE-Arbeit Milo Dor  -  Microsoft Word nichtkommerzielle Verwendung</Title>
      <WindowButtons>
        <WindowButton $look="min" aria-label="Minimieren">
          <svg width="10" height="4"><rect width="10" height="3" fill="#fff" /></svg>
        </WindowButton>
        <WindowButton $look="max" aria-label="Verkleinern">
          <svg width="12" height="12" viewBox="0 0 12 12" fill="none" stroke="#fff" strokeWidth="1.500">
            <path d="M3 3V1h8v8H9M1 3h8v8H1zM4 6h2v2H4z" />
          </svg>
        </WindowButton>
        <WindowButton $look="close" aria-label="Schließen">
          <svg width="12" height="10" viewBox="0 0 12 10" stroke="#fff" strokeWidth="2.500">
            <path d="M2 1l8 8M10 1L2 9" />
          </svg>
        </WindowButton>
      </WindowButtons>
    </TitleRow>
    <TabRow>
      <FileTab>Datei</FileTab>
      {tabs.map((t) => (
        <Tab key={t} $active={t === "Start"}>{t}</Tab>
      ))}
      <HelpRow>
        <Caret up s={8} c="#666" />
        <svg width="14" height="14" viewBox="0 0 14 14">
          <circle cx="7" cy="7" r="7" fill="#2f6fce" />
          <path d="M5 5c0-3 5-2 4 0l-2 2v2M7 10v2" stroke="#fff" strokeWidth="1.500" fill="none" />
        </svg>
      </HelpRow>
    </TabRow>
    <Tooltip role="tooltip">Verkleinern</Tooltip>
  </Glass>
);

const RibbonBar = () => (
  <Ribbon>
    <Group $w={183}>
      <GroupBody $pad="2px 0 0 0">
        <BigTool $w={59}>
          <PasteIcon />
          <span>Einfügen</span>
          <Caret />
        </BigTool>
        <Stack>
          <TextTool disabled><CutIcon />Ausschneiden</TextTool>
          <TextTool disabled><CopyIcon />Kopieren</TextTool>
          <TextTool><BrushIcon />Format übertragen</TextTool>
        </Stack>
      </GroupBody>
      <Foot label="Zwischenablage" />
    </Group>

    <Group $w={274}>
      <GroupBody $pad="9px 0 0 5px">
        <Rows>
          <ToolRow>
            <Combo $w={86}>
              <select aria-label="Schriftart"><option>Times New Roman</option></select>
              <Caret />
            </Combo>
            <Combo $w={62}>
              <select aria-label="Schriftgrad"><option>12</option></select>
              <Caret />
            </Combo>
            <Tool $gap={1} $w={26} aria-label="Vergrößern"><Glyph $size={16}>A</Glyph><Caret up c="#2f62b8" /></Tool>
            <Tool $gap={1} $w={20} aria-label="Verkleinern"><Glyph $size={12}>A</Glyph><Caret c="#2f62b8" /></Tool>
            <Sep />
            <Tool $w={30}><Glyph>Aa</Glyph><Caret /></Tool>
            <Sep />
            <Tool aria-label="Formatierung löschen"><EraserIcon /></Tool>
          </ToolRow>
          <ToolRow>
            <Tool><Glyph>F</Glyph></Tool>
            <Tool><Glyph $italic>K</Glyph></Tool>
            <Tool $w={36} $gap={10}><Glyph $line="underline">U</Glyph><Caret /></Tool>
            <Tool><Glyph $size={12} $line="line-through">abc</Glyph></Tool>
            <Tool aria-label="Tiefgestellt"><ScriptX /></Tool>
            <Tool aria-label="Hochgestellt"><ScriptX up /></Tool>
            <Sep />
            <Tool $w={32} aria-label="Texteffekte"><OutlineA /><Caret /></Tool>
            <Tool $w={34} $gap={6} aria-label="Hervorheben"><MarkerIcon /><Caret /></Tool>
            <Tool $w={34} $gap={6} aria-label="Schriftfarbe"><ColorA /><Caret /></Tool>
          </ToolRow>
        </Rows>
      </GroupBody>
      <Foot label="Schriftart" />
    </Group>

    <Group $w={228}>
      <GroupBody $pad="9px 0 0 5px">
        <Rows>
          <ToolRow>
            <Tool $w={35} $gap={6} aria-label="Aufzählung"><ListIcon kind="dots" /><Caret /></Tool>
            <Tool $w={35} $gap={6} aria-label="Nummerierung"><ListIcon /><Caret /></Tool>
            <Tool $w={28} aria-label="Liste mit mehreren Ebenen"><ListIcon kind="multi" /><Caret /></Tool>
            <Sep />
            <Tool aria-label="Einzug verkleinern"><IndentIcon out /></Tool>
            <Tool aria-label="Einzug vergrößern"><IndentIcon /></Tool>
            <Sep $m={4} />
            <Tool aria-label="Sortieren"><SortIcon /></Tool>
            <Sep $m={4} />
            <Tool><Glyph>¶</Glyph></Tool>
          </ToolRow>
          <ToolRow>
            <Tool $active aria-label="Linksbündig"><AlignIcon kind="left" /></Tool>
            <Tool $w={24} aria-label="Zentriert"><AlignIcon kind="center" /></Tool>
            <Tool $w={24} aria-label="Rechtsbündig"><AlignIcon kind="right" /></Tool>
            <Tool aria-label="Blocksatz"><AlignIcon kind="full" /></Tool>
            <Sep />
            <Tool $w={28} aria-label="Zeilenabstand"><SpacingIcon /><Caret /></Tool>
            <Sep />
            <Tool $w={34} $gap={6} aria-label="Schattierung"><FillIcon /><Caret /></Tool>
            <Tool $w={30} $gap={6} aria-label="Rahmen"><BorderIcon /><Caret /></Tool>
          </ToolRow>
        </Rows>
      </GroupBody>
      <Foot label="Absatz" />
    </Group>

    <Group $grow>
      <GroupBody $pad="5px 0 0 6px">
        <Gallery>
          {styleItems.map((s, i) => (
            <StyleItem key={i} $active={s.active}>
              <Sample $kind={s.kind}>{s.sample}</Sample>
              <StyleName>{s.name}</StyleName>
            </StyleItem>
          ))}
          <GalleryNav>
            <button aria-label="Zurück"><Caret up c="#bbb" /></button>
            <button aria-label="Weiter"><Caret /></button>
            <button aria-label="Alle Formatvorlagen"><Dash /><Caret /></button>
          </GalleryNav>
        </Gallery>
        <BigTool $w={92}>
          <ChangeStyles />
          <span>Formatvorlagen</span>
          <span>ändern <Caret /></span>
        </BigTool>
      </GroupBody>
      <Foot label="Formatvorlagen" />
    </Group>

    <Group $w={96}>
      <GroupBody $pad="2px 0 0 8px">
        <Stack>
          <TextTool><Binoculars />Suchen <Caret /></TextTool>
          <TextTool><ReplaceIcon />Ersetzen</TextTool>
          <TextTool><CursorIcon />Markieren <Caret /></TextTool>
        </Stack>
      </GroupBody>
      <Foot label="Bearbeiten" launcher={false} />
    </Group>
  </Ribbon>
);

const Navigation = () => (
  <NavPane>
    <NavHead>
      <h2>Navigation</h2>
      <Caret s={9} c="#333" />
      <button aria-label="Bereich schließen">
        <svg width="9" height="9" viewBox="0 0 9 9" stroke="#444" strokeWidth="2">
          <path d="M1 1l7 7M8 1L1 8" />
        </svg>
      </button>
    </NavHead>
    <SearchBox>
      <input placeholder="Dokument durchsuchen" aria-label="Dokument durchsuchen" />
      <SearchIcon />
      <Caret />
    </SearchBox>
    <ViewTabs>
      <ViewTab $active aria-label="Überschriften"><PageTabIcon /></ViewTab>
      <ViewTab aria-label="Seiten"><ThumbsIcon /></ViewTab>
      <ViewTab aria-label="Ergebnisse"><ResultsIcon /></ViewTab>
      <Arrows>
        <Caret up s={10} c="#444" />
        <Caret s={10} c="#444" />
      </Arrows>
    </ViewTabs>
    <Outline>
      <HeadingList>
        {headings.map((h, i) => (
          <li key={i}>
            <HeadingRow $level={h.level} $active={h.active} $center={h.top} aria-label={h.text || "Überschrift"}>
              {h.top ? (
                <svg height="7" viewBox="0 0 12 7">
                  <path d="M2 .5h8M6 2l3.500 4h-7z" fill="#333" stroke="#333" />
                </svg>
              ) : h.open ? (
                <svg height="7" viewBox="0 0 12 7">
                  <path d="M.5 6.500h6v-6z" fill="#555" stroke="#111" />
                </svg>
              ) : (
                <i />
              )}
              {h.text}
            </HeadingRow>
          </li>
        ))}
      </HeadingList>
      <ListScroll>
        <button aria-label="Nach oben"><Caret up s={9} c="#8e9bc4" /></button>
        <button aria-label="Nach unten"><Caret s={9} c="#8e9bc4" /></button>
      </ListScroll>
    </Outline>
  </NavPane>
);

const Document = () => (
  <DocColumn>
    <HRulerWrap>
      <HRuler>
        <Marks from={-9} to={73} skip={[0, 64]} />
        <Indent $at={11.8} $top={-4}>
          <svg width="9" height="22" viewBox="0 0 9 22" fill="#e9eaec" stroke="#777">
            <path d="M.5.5h8v3l-4 4-4-4zM4.500 8.500l4 4v3h-8v-3zM.5 16.500h8v5h-8z" />
          </svg>
        </Indent>
        <Indent $at={87.9} $top={4}>
          <svg width="9" height="8" viewBox="0 0 9 8" fill="#e9eaec" stroke="#777">
            <path d="M4.500.5l4 4v3h-8v-3z" />
          </svg>
        </Indent>
      </HRuler>
      <DefaultTabs>
        {Array.from({ length: 12 }, (_, i) => <span key={i} />)}
      </DefaultTabs>
    </HRulerWrap>
    <PreviousPage />
    <Page>
      <h3>1. Einleitung</h3>
      <Line>Mit der im Jahr 2004 vollzogenen Erweiterung um die ehemals kommunistischen Staaten</Line>
      <Line>Ungarn, Polen, Tschechien, die Slowakei sowie das Baltikum hatte sich vielerorts die</Line>
      <Line>Hoffnung verbunden, dass sich das in den späten 1980ern von Francis <Misspelled>Fukuyama</Misspelled> ausgerufene</Line>
      <Line>„Ende der Geschichte“<sup>1</sup> endlich auch in Zentral- und (Süd-)Osteuropa vollends verwirklichen</Line>
      <Line>würde. Doch obwohl sich dieser Weg zu liberaler Demokratie und Marktwirtschaft auch noch</Line>
      <Line>in den folgenden Jahren mit den Erwe<TextCursor />iterungsrunden von Rumänien und Bulgarien sowie</Line>
      <Line>Kroatien fortgesetzt zu haben schien, fällt die Bilanz vieler politischer Journalisten und</Line>
      <Line>Experten anlässlich des kürzlich begangenen 15-Jahr-Jubiläums der ersten EU-</Line>
      <Line>Osterweiterung <Misspelled>großteils</Misspelled> durchwachsen aus. Zwar herrscht weitgehend Konsens über die v.a.</Line>
      <Line>ökonomischen Fortschritte in den neuen Mitgliedsstaaten, die anfängliche Euphorie über die</Line>
      <Line>nun auch institutionalisierte (Re-)Integration der im Kalten Krieg isolierten Staaten in ein</Line>
      <Line>gemeinsames Europa ist mittlerweile jedoch einer gewissen Ernüchterung gewichen.<sup>2</sup> Denn</Line>
      <Line>spätestens in der nach der „Flüchtlingskrise“ 2015 geführten Debatte über die Identität und</Line>
      <Line>Werte Europas hat sich in der Union zunehmend das plakative Gegensatzpaar eines</Line>
      <Line>demokratischen, kerneuropäischen Westens und eines autoritären, EU-kritischen Ostens</Line>
      <Line>herauskristallisiert. Sinnbildlich dafür stehen nicht zuletzt die bis dahin einmaligen</Line>
      <Line>Rechtsstaatlichkeitskonflikte der Europäischen Kommission mit den Regierungen in Polen,</Line>
      <Line>Ungarn und Rumänien.<sup>3</sup> Zur Überwindung dieser Gräben wurde von politischen</Line>
      <Line>Entscheidungsträgern zuletzt sogar wieder der Reformvorschlag einer EU der verschiedenen</Line>
      <Line>Geschwindigkeiten ins Spiel gebracht<sup>4</sup>, was die bisherige Integrationsstrategie für Zentral-</Line>
      <Line>und (Süd-)Osteuropa zumindest wieder stark in Frage stellen würde. 30 Jahre nach dem Fall</Line>
      <Line>des Eisernen Vorhangs und 15 Jahre nach der ersten EU-Osterweiterung scheint es angesichts</Line>
    </Page>
  </DocColumn>
);

const Scroller = () => (
  <DocScroll>
    <SplitBar />
    <button aria-label="Lineal">
      <svg width="17" height="17" viewBox="0 0 17 17" fill="none" stroke="#777">
        <path d="M.5.5h16v16H.5z" fill="#dfe1e5" />
        <path d="M3.500 3.500h5v3h4v6h-4l-5-4z" fill="#f1e9f0" />
        <path d="M7 7l5 5" strokeDasharray="1 1" />
      </svg>
    </button>
    <button aria-label="Nach oben"><Caret up s={9} c="#555" /></button>
    <ScrollThumb>
      <svg width="7" height="7" stroke="#888"><path d="M0 .5h7M0 3.500h7M0 6.500h7" /></svg>
    </ScrollThumb>
    <ScrollEnd>
      <button aria-label="Nach unten"><Caret s={9} c="#555" /></button>
      <button aria-label="Vorherige Seite">
        <svg width="7" height="8" viewBox="0 0 7 8" fill="#444"><path d="M0 4l3.500-4L7 4zM0 7l3.500-4L7 7z" /></svg>
      </button>
      <button aria-label="Browseobjekt">
        <svg width="8" height="8" fill="none" stroke="#555"><circle cx="4" cy="4" r="3" /></svg>
      </button>
      <button aria-label="Nächste Seite">
        <svg width="7" height="8" viewBox="0 0 7 8" fill="#444"><path d="M0 1l3.500 4L7 1zM0 4l3.500 4L7 4z" /></svg>
      </button>
    </ScrollEnd>
  </DocScroll>
);

const Status = () => (
  <StatusBar>
    <StatusCell $w={92}>Seite: 3 von 39</StatusCell>
    <StatusCell $w={94}>Wörter: 10.023</StatusCell>
    <StatusCell $w={33} $plain aria-label="Rechtschreibung"><ProofIcon /></StatusCell>
    <StatusCell $w={134}>Deutsch (Deutschland)</StatusCell>
    <ViewButtons>
      <ViewButton $active aria-label="Seitenlayout">
        <svg width="12" height="12" viewBox="0 0 12 12" fill="#fff" stroke="#555"><path d="M.5.5h11v11H.5zM2 3.500h8M2 5.500h8M2 7.500h8M2 9.500h8" /></svg>
      </ViewButton>
      <ViewButton aria-label="Vollbild-Lesemodus"><BookIcon /></ViewButton>
      <ViewButton aria-label="Weblayout"><WebIcon /></ViewButton>
      <ViewButton aria-label="Gliederung">
        <svg width="10" height="11" stroke="#888"><path d="M0 .5h7M3 3.500h7M3 5.500h5M3 7.500h7M0 10.500h9" /></svg>
      </ViewButton>
      <ViewButton aria-label="Entwurf">
        <svg width="10" height="11" stroke="#666"><path d="M0 1.500h10M0 4.500h10M0 7.500h10M0 10.500h10" /></svg>
      </ViewButton>
      <StatusCell $w={50} $plain>100 %</StatusCell>
      <Round aria-label="Verkleinern"><svg width="8" height="2"><rect width="8" height="2" fill="#444" /></svg></Round>
      <Zoom type="range" min="10" max="190" defaultValue="100" aria-label="Zoom" />
      <Round aria-label="Vergrößern"><svg width="8" height="8"><path d="M0 3h8v2H0zM3 0h2v8H3z" fill="#444" /></svg></Round>
    </ViewButtons>
  </StatusBar>
);

const Tasks = () => (
  <Taskbar>
    <StartButton aria-label="Start"><StartOrb /></StartButton>
    <TaskButton $w={68} aria-label="PowerPoint"><PowerPointIcon /></TaskButton>
    <TaskButton $w={50} $running $stacked aria-label="Word"><WordLogo s={30} /></TaskButton>
    <TaskButton $w={66} $ml={8} aria-label="Firefox"><FirefoxIcon /></TaskButton>
    <TaskButton $w={58} $running aria-label="Explorer"><ExplorerIcon /></TaskButton>
    <TaskButton $w={59} $ml={4} $running aria-label="Paint"><PaintIcon /></TaskButton>
    <Tray>
      <Language>DE</Language>
      <Caret up s={7} c="#fff" />
      <TrayApp />
      <BatteryIcon />
      <SoundIcon />
      <FlagIcon />
      <Clock>17:40<br />06.02.2020</Clock>
      <ShowDesktop aria-label="Desktop anzeigen" />
    </Tray>
  </Taskbar>
);

const App = () => (
  <>
    <GlobalStyle />
    <Desktop>
      <TitleBar />
      <RibbonBar />
      <Workspace>
        <Navigation />
        <RulerColumn>
          <TabStop aria-label="Tabstopp">
            <span>
              <svg width="6" height="6"><path d="M1 0v5h5" fill="none" stroke="#333" strokeWidth="2" /></svg>
            </span>
          </TabStop>
          <VRuler>
            <Marks from={-8} to={76} vertical skip={[0]} />
          </VRuler>
        </RulerColumn>
        <Document />
        <Scroller />
      </Workspace>
      <Status />
      <Tasks />
    </Desktop>
  </>
);

export default App;
